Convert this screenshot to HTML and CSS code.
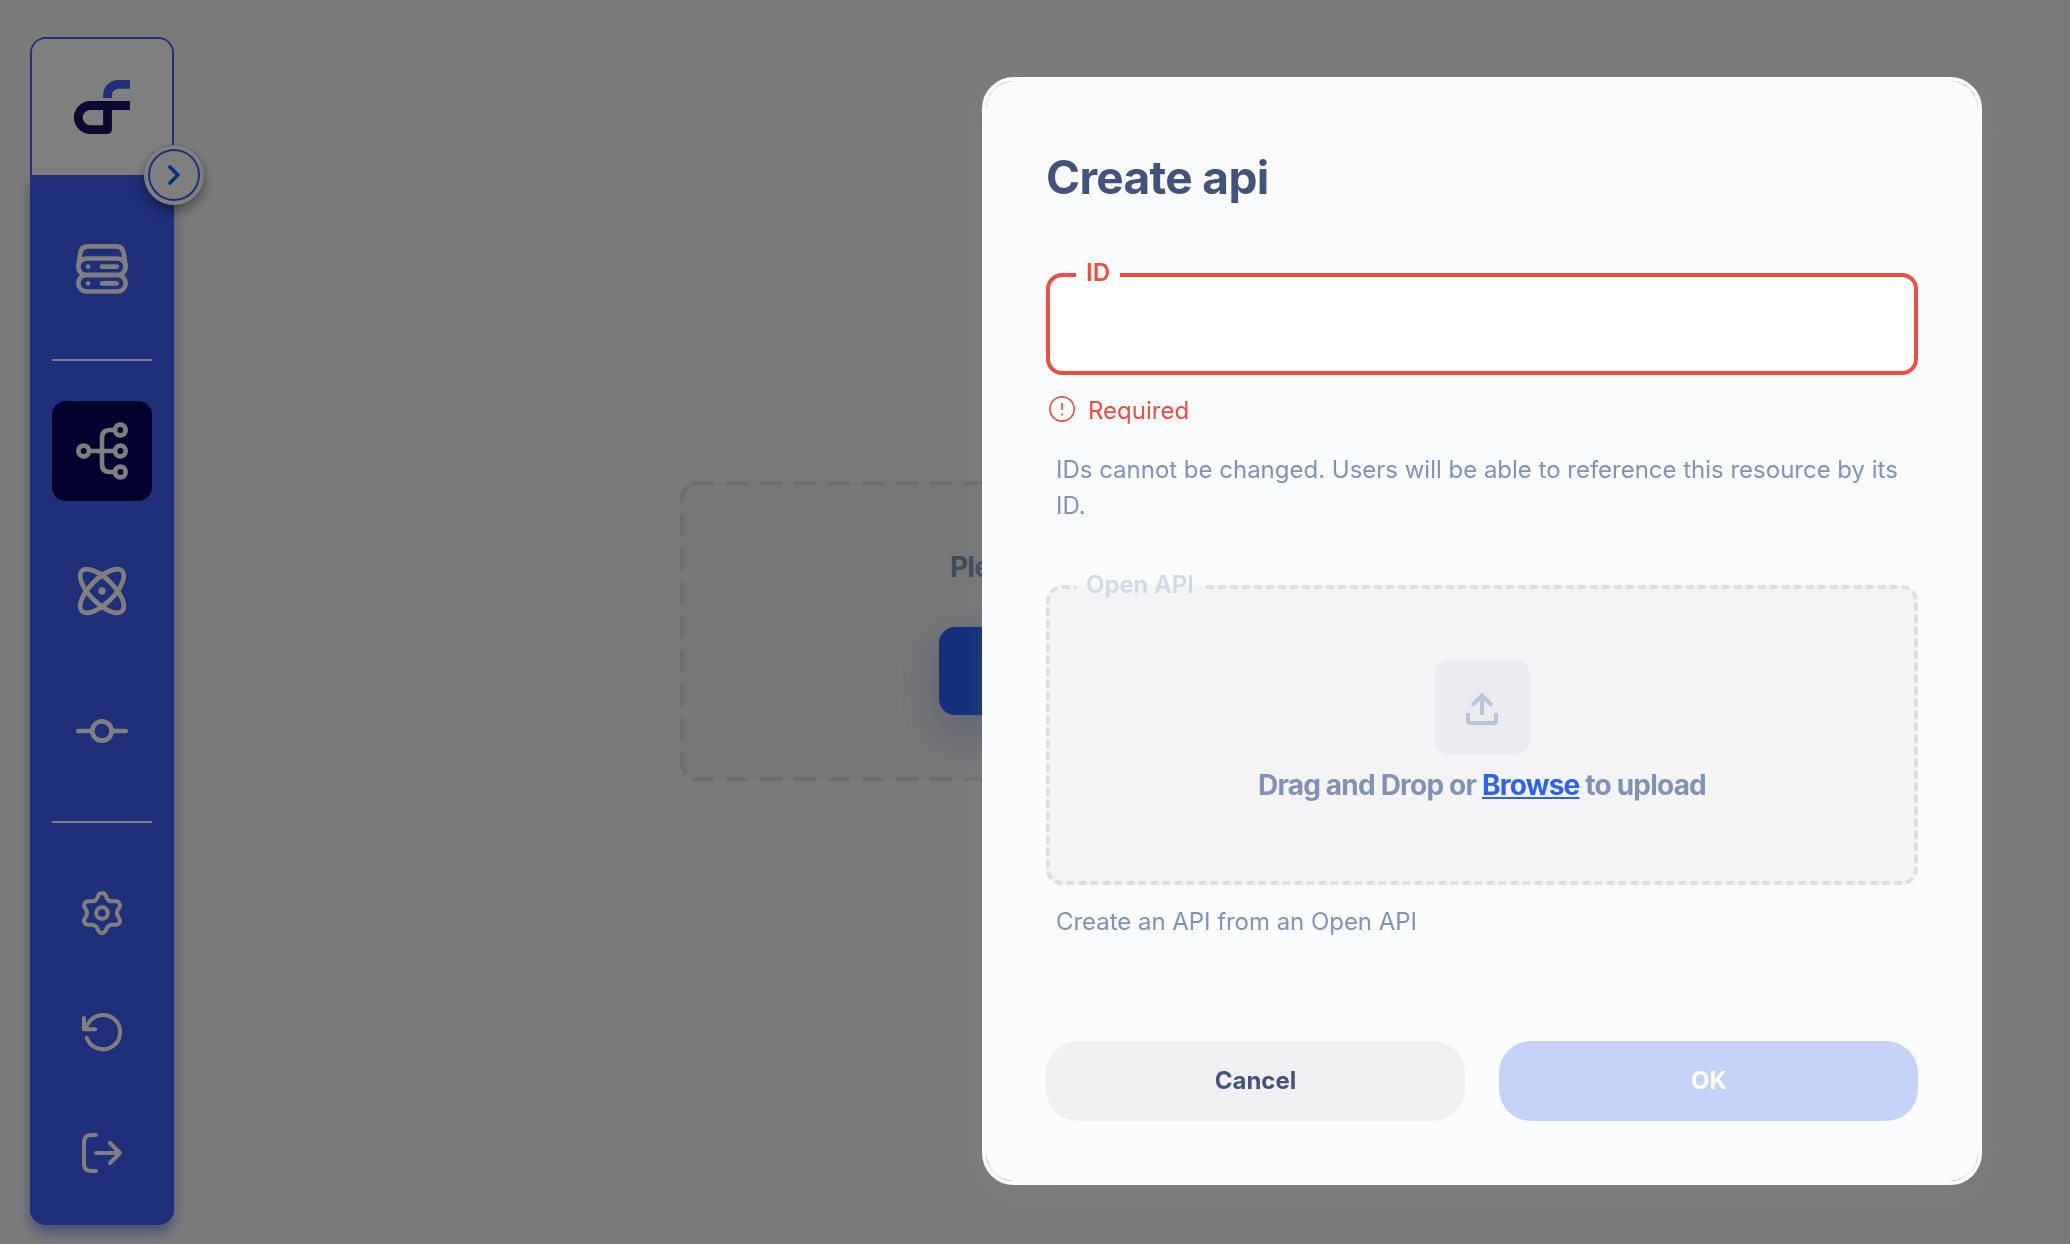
FILE: index.html
```
<!DOCTYPE html>
<html lang="en">
<head>
<meta charset="utf-8">
<title>Create api</title>
<link rel="stylesheet" href="styles.css">
</head>
<body>
<div class="app">
  <aside class="sidebar">
    <div class="brand">
      <svg class="brand-logo" viewBox="162 180 168 162" fill="none" stroke-width="26.5">
        <path class="logo-light" d="M330 193H295A33 33 0 0 0 262.500 226V234"/>
        <path class="logo-dark" stroke-linejoin="round" d="M330 256.500H211A36 36 0 0 0 211 328.700H262.500V256.500"/>
      </svg>
      <button class="toggle" aria-label="Expand menu">
        <svg class="chevron" viewBox="444 435 36 60" fill="none"><path d="M450 441L473.500 465L450 489"/></svg>
      </button>
    </div>
    <nav class="nav">
      <a class="item">
        <svg class="icon" width="52" height="50" viewBox="168 72 156 150">
          <path d="M175.500 138L180 104Q183 79 203 79H289Q309 79 312 104L316.500 138"/>
          <rect x="175" y="115.500" width="142" height="49.500" rx="24.700"/>
          <rect x="175" y="165" width="142" height="49.500" rx="24.700"/>
          <path d="M204 140h.01M204 190h.01M246 140H290M246 190H290"/>
        </svg>
      </a>
      <hr class="divider">
      <a class="item active">
        <svg class="icon" width="52" height="58" viewBox="168 606 156 174">
          <circle cx="191" cy="693" r="16"/><circle cx="301" cy="630" r="16"/>
          <circle cx="301" cy="693" r="16"/><circle cx="301" cy="756" r="16"/>
          <path d="M207 693H285M285 630H270Q246 630 246 654V732Q246 756 270 756H285"/>
        </svg>
      </a>
      <a class="item">
        <svg class="icon" width="50" height="50" viewBox="171 138 150 150">
          <ellipse cx="246" cy="213" rx="85.300" ry="36" transform="rotate(45 246 213)"/>
          <ellipse cx="246" cy="213" rx="85.300" ry="36" transform="rotate(-45 246 213)"/>
          <circle class="solid" cx="246" cy="213" r="11"/>
        </svg>
      </a>
      <a class="item">
        <svg class="icon" width="52" height="26" viewBox="168 594 156 78">
          <circle cx="246" cy="633" r="29"/><path d="M175 633H214M278 633H317"/>
        </svg>
      </a>
      <hr class="divider">
      <a class="item">
        <svg class="icon icon-thin" width="42" height="46" viewBox="183 150 126 138">
          <circle cx="246" cy="219" r="17.500"/>
          <path d="M234 168Q238 159 246 159Q254 159 258 168Q262 184 275 184H285Q295 182 299 192Q302 199 296 205Q286 219 296 233Q302 239 299 246Q295 256 285 254H275Q262 256 258 270Q254 279 246 279Q238 279 234 270Q230 256 217 254H207Q197 256 193 246Q190 239 196 233Q206 219 196 205Q190 199 193 192Q197 182 207 184H217Q230 184 234 168Z"/>
        </svg>
      </a>
      <div class="group">
        <a class="item">
          <svg class="icon icon-thin" width="42" height="40" viewBox="183 519 126 120">
            <path d="M192 534V567.500H226M194 566L203 553A51.500 51.500 0 1 1 200.500 594"/>
          </svg>
        </a>
        <a class="item">
          <svg class="icon icon-thin" width="42" height="42" viewBox="183 876 126 126">
            <path d="M228 885H214Q192 885 192 907V971Q192 993 214 993H228M228 939H299M270 909L300 939L270 969"/>
          </svg>
        </a>
      </div>
    </nav>
  </aside>
  <main class="content">
    <section class="empty">
      <svg class="empty-outline" width="900" height="300" fill="none">
        <path d="M12 2H888M12 298H888"/>
        <path d="M6.500 292Q2 287 2 282V18A15 15 0 0 1 10 4.500"/>
      </svg>
      <p class="empty-title">Please</p>
      <button class="empty-action" aria-label="Create api"></button>
    </section>
  </main>
</div>
<div class="overlay">
  <div class="modal" role="dialog">
    <h1 class="title">Create api</h1>
    <fieldset class="field field-error"><legend class="legend">ID</legend></fieldset>
    <div class="error">
      <svg class="error-icon" width="26" height="26" viewBox="0 0 26 26" fill="none"><circle cx="13" cy="13" r="12.200"/><path d="M13 7V14M13 17.500V19.500"/></svg>
      <span>Required</span>
    </div>
    <p class="help">IDs cannot be changed. Users will be able to reference this resource by its ID.</p>
    <fieldset class="field drop"><legend class="legend">Open API</legend>
      <div class="drop-body">
        <div class="tile">
          <svg width="32" height="32" viewBox="0 0 32 32" fill="none"><path d="M2 20V28Q2 30 4 30H28Q30 30 30 28V20M16 3V22"/><path d="M6 12.500L16 2.500L26 12.500"/></svg>
        </div>
        <p class="drop-text">Drag and Drop or <a class="browse">Browse</a> to upload</p>
      </div>
    </fieldset>
    <p class="help help-drop">Create an API from an Open API</p>
    <div class="actions"><button class="btn">Cancel</button><button class="btn btn-ok">OK</button></div>
  </div>
</div>
</body>
</html>
```
FILE: styles.css
```
* { box-sizing: border-box; }
body { margin: 0; font-family: Inter, sans-serif; background: #f5f5f5; overflow: hidden; }
button { border: 0; padding: 0; font: inherit; }
p, h1 { margin: 0; }

.app { display: flex; height: 1244px; padding: 37px 0 19px 30px; }
.sidebar {
  display: flex; flex-direction: column;
  width: 144px; height: 1188px; border: 2px solid #3e5ef2; border-bottom: 0; border-radius: 16px;
}
.brand {
  position: relative; display: flex; align-items: center; justify-content: center;
  height: 136px; background: #fff; border-radius: 14px 14px 0 0;
}
.brand-logo { width: 56px; height: 54px; }
.logo-light { stroke: #3e5ef2; }
.logo-dark { stroke: #1a125c; }
.toggle {
  position: absolute; z-index: 1; right: -32px; bottom: -30px; width: 60px; height: 60px;
  display: flex; align-items: center; justify-content: center; border-radius: 50%;
  background: #fff; box-shadow: inset 0 0 0 4px #fff, inset 0 0 0 6px #3e5ef2, 0 6px 12px rgba(0, 0, 0, .4);
}
.chevron { width: 12px; height: 20px; stroke: #0068ff; stroke-width: 11; stroke-linecap: round; stroke-linejoin: round; }

.nav {
  display: flex; flex: 1; flex-direction: column; align-items: center; gap: 40px;
  margin: 0 -2px; padding-top: 44px; border-radius: 0 0 16px 16px;
  background: #3e5ef2; box-shadow: 0 8px 12px rgba(62, 94, 242, .5);
}
.group { display: flex; flex-direction: column; gap: 20px; margin-top: -20px; }
.item { display: flex; align-items: center; justify-content: center; width: 100px; height: 100px; border-radius: 14px; }
.active { background: #04025c; }
.divider { width: 100px; height: 2px; margin: 0; border: 0; background: #fff; }
.icon { fill: none; stroke: #fff; stroke-width: 14; stroke-linecap: round; stroke-linejoin: round; }
.icon-thin { stroke-width: 12; }
.icon .solid { fill: #fff; stroke: none; }

.content { flex: 1; display: flex; align-items: center; justify-content: center; padding: 0 0 0 16px; }
.empty {
  position: relative; width: 900px; height: 300px; margin: -1px 0 0 0; padding-top: 69px;
  display: flex; flex-direction: column; align-items: center; background: #efefef; border-radius: 16px;
}
.empty-outline { position: absolute; inset: 0; stroke: #dcdcdf; stroke-width: 4; stroke-dasharray: 22 12; }
.empty-title { width: 360px; font-size: 28px; line-height: 34px; font-weight: 700; letter-spacing: -.8px; color: #8593b5; }
.empty-action {
  width: 382px; height: 88px; margin-top: 43px; border-radius: 16px; background: #285ef6;
  box-shadow: 0 16px 40px rgba(62, 80, 200, .3);
}

.overlay {
  position: fixed; z-index: 10; inset: 0; display: flex; justify-content: flex-end; align-items: flex-start;
  padding: 77px 88px 0 0; background: rgba(0, 0, 0, .5);
}
.modal {
  width: 1000px; height: 1108px; padding: 68px 60px 60px; border: 4px solid #fafcfe; border-radius: 32px;
  background: #fafcfe; background-clip: padding-box; box-shadow: 0 8px 32px rgba(130, 150, 170, .16);
}
.title { font-size: 46px; line-height: 56px; font-weight: 700; letter-spacing: -.65px; color: #44537c; }
.field { min-width: 0; margin: 53px 0 0; padding: 0 26px; border: 4px solid #ef4c43; border-radius: 16px; height: 117px; background: #fff; }
.legend { padding: 0 10px 5px; width: 44px; font-size: 24px; line-height: 29px; font-weight: 600; color: #ef4c43; white-space: nowrap; }
.error { display: flex; gap: 13px; margin-top: 18px; padding-left: 3px; font-size: 24px; line-height: 36px; color: #ef4c43; }
.error-icon { margin-top: 3px; stroke: currentColor; stroke-width: 1.7; }
.help { margin-top: 23px; padding-left: 10px; font-size: 24px; line-height: 36px; letter-spacing: -.01px; color: #8292b7; }
.drop { height: 315px; margin-top: 46px; border: 4px dashed #dedee0; background: #f4f4f6; }
.drop .legend { width: 130px; color: #d2d8e6; }
.drop-body { display: flex; flex-direction: column; align-items: center; padding-top: 55px; }
.tile { display: flex; align-items: center; justify-content: center; width: 96px; height: 96px; padding-top: 4px; border-radius: 16px; background: #ecebef; stroke: #b8c4dc; stroke-width: 4; }
.drop-text { margin-top: 13px; font-size: 28px; line-height: 34px; font-weight: 700; letter-spacing: -.79px; color: #8292b4; white-space: nowrap; }
.browse { color: #2962ff; text-decoration: underline 2px; text-underline-offset: 2px; text-decoration-skip-ink: none; }
.help-drop { margin-top: 19px; letter-spacing: -.04px; }
.actions { display: grid; grid-template-columns: 419px 419px; gap: 34px; margin-top: 101px; }
.btn { height: 80px; padding-bottom: 1px; border-radius: 32px; background: #f0f0f2; color: #44537c; font-size: 24px; font-weight: 700; }
.btn-ok { padding-left: 1px; background: #c6d3f9; color: #fff; }
```
